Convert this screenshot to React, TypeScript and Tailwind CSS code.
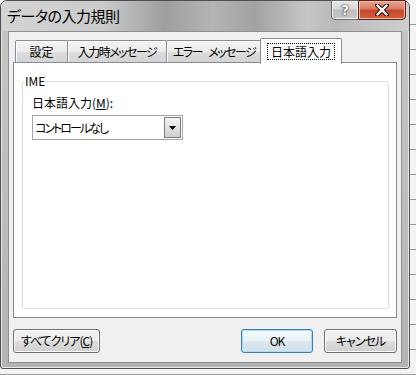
import React from "react";

const Tab: React.FC<{ label: string; w: string; active?: boolean; first?: boolean; tight?: boolean }> = ({
  label,
  w,
  active,
  first,
  tight,
}) => {
  if (active) {
    return (
      <div
        className={`${w} relative z-10 -ml-[2px] -mb-px h-[26px] border border-b-0 border-[#898c95] bg-white rounded-t-[2px] flex items-start justify-center pt-[4px]`}
      >
        <span className="border border-dotted border-black px-[3px] h-[17px] leading-[15px] text-[12px]">{label}</span>
      </div>
    );
  }
  return (
    <div
      className={`${w} ${first ? "" : "-ml-px"} ${tight ? "tracking-[-1.5px] [word-spacing:5px]" : ""} h-[23px] border border-b-0 border-[#898c95] rounded-t-[2px] bg-[linear-gradient(to_bottom,#f3f3f3_0%,#ebebeb_50%,#dddddd_50%,#d2d2d2_100%)] shadow-[inset_1px_1px_0_#fcfcfc] flex items-center justify-center text-[12px] leading-[14px]`}
    >
      {label}
    </div>
  );
};

const Button: React.FC<{ children: React.ReactNode; w: string; primary?: boolean }> = ({ children, w, primary }) => (
  <button
    className={`${w} h-[24px] rounded-[3px] border text-[12px] leading-[14px] text-black tracking-[-1px] ${
      primary
        ? "border-[#3c7fb1] shadow-[inset_0_0_0_1px_#a9dcf6] bg-[linear-gradient(to_bottom,#f4f9fc_0%,#eaf2f7_50%,#dde8ef_50%,#d3e0e8_100%)]"
        : "border-[#707070] shadow-[inset_0_0_0_1px_#fbfbfb] bg-[linear-gradient(to_bottom,#f2f2f2_0%,#ebebeb_50%,#dddddd_50%,#cfcfcf_100%)]"
    }`}
  >
    {children}
  </button>
);

export default function App() {
  return (
    <div className="w-[416px] h-[375px] overflow-hidden bg-[#f4f4f4] bg-[repeating-linear-gradient(to_bottom,transparent_0px,transparent_24px,#9a9a9a_24px,#9a9a9a_25px)] font-['Meiryo_UI','Noto_Sans_CJK_JP',sans-serif] [font-feature-settings:'palt'] text-black">
      <div className="w-[410px] h-[369px] rounded-t-[7px] rounded-b-[3px] border border-[#4e4e4e] bg-[linear-gradient(to_bottom,#cfcfcf_0%,#c4c4c4_10%,#bdbdbd_60%,#b3b3b3_100%)] shadow-[inset_0_0_0_1px_#e9e9e9] flex flex-col">
        {/* title bar */}
        <div className="h-[30px] flex items-start justify-between rounded-t-[6px] bg-[linear-gradient(to_right,#d4d4d4_0%,#cbcbcb_25%,#9f9f9f_40%,#b4b4b4_52%,#a2a2a2_62%,#c6c6c6_75%,#b9b9b9_82%,#cfcfcf_100%)]">
          <div className="pl-[6px] pt-[5px] text-[15px] leading-[20px] text-black tracking-[-0.5px]">データの入力規則</div>
          <div className="flex -mt-px mr-[3px]">
            <div className="w-[28px] h-[20px] border border-[#6b6b6b] rounded-bl-[4px] bg-[linear-gradient(to_bottom,#e8e8e8_0%,#d7d7d7_45%,#bdbdbd_50%,#c9c9c9_100%)] shadow-[inset_0_0_0_1px_#f2f2f2] flex items-center justify-center">
              <span className="text-[14px] font-bold leading-none text-white [text-shadow:0_0_2px_#333,0_0_1px_#000] font-['DejaVu_Sans',sans-serif]">?</span>
            </div>
            <div className="w-[48px] h-[20px] -ml-px border border-[#5b2418] rounded-br-[4px] bg-[linear-gradient(to_bottom,#e8a493_0%,#d97a63_45%,#c7472b_50%,#d1603f_100%)] shadow-[inset_0_0_0_1px_#eebcae] flex items-center justify-center">
              <svg width="14" height="12" viewBox="0 0 14 12">
                <path d="M2 1 L12 11 M12 1 L2 11" stroke="#3b1a12" strokeWidth="4.5" strokeLinecap="round" />
                <path d="M2.5 1.5 L11.5 10.5 M11.5 1.5 L2.5 10.5" stroke="#ffffff" strokeWidth="2.4" strokeLinecap="round" />
              </svg>
            </div>
          </div>
        </div>

        {/* client */}
        <div className="mx-[7px] h-[332px] border border-[#8f8f8f] bg-[#f0f0f0] flex flex-col px-[4px]">
          <div className="mt-[5px] h-[26px] flex items-end pl-[2px]">
            <Tab label="設定" w="w-[53px]" first />
            <Tab label="入力時メッセージ" w="w-[100px]" tight />
            <Tab label="エラー メッセージ" w="w-[96px]" tight />
            <Tab label="日本語入力" w="w-[82px]" active />
          </div>

          <div className="-mt-px h-[256px] border border-[#898c95] bg-white flex flex-col">
            <fieldset className="mt-[11px] ml-[8px] w-[367px] h-[235px] border border-[#d5dfe5] rounded-[3px] flex flex-col">
              <legend className="ml-[1px] px-[1px] text-[12px] leading-[14px]">IME</legend>
              <div className="pl-[9px] mt-[7px] text-[12px] leading-[16px]">
                日本語入力(<span className="underline">M</span>):
              </div>
              <div className="ml-[9px] mt-[4px] w-[151px] h-[25px] border border-[#a4a4a4] bg-white flex items-stretch">
                <div className="flex-1 pl-[2px] flex items-center text-[12px] leading-[14px] tracking-[-2px]">コントロールなし</div>
                <div className="w-[17px] m-px border border-[#7b7b7b] bg-[linear-gradient(to_bottom,#f4f4f4_0%,#e3e3e3_50%,#cfcfcf_100%)] flex items-center justify-center">
                  <svg width="7" height="4" viewBox="0 0 7 4">
                    <path d="M0 0 L7 0 L3.5 4 Z" fill="#000" />
                  </svg>
                </div>
              </div>
            </fieldset>
          </div>

          <div className="mt-[11px] flex">
            <Button w="w-[87px]">
              すべてクリア(<span className="underline">C</span>)
            </Button>
            <div className="flex-1" />
            <Button w="w-[72px]" primary>
              OK
            </Button>
            <div className="w-[11px]" />
            <Button w="w-[73px]">キャンセル</Button>
          </div>
        </div>
      </div>
    </div>
  );
}
